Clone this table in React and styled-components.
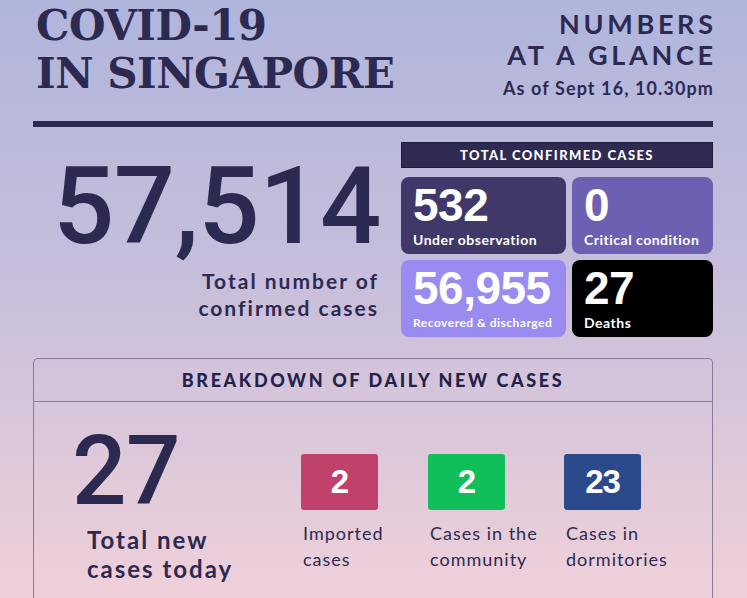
import React from "react";
import styled, { createGlobalStyle } from "styled-components";

const GlobalStyle = createGlobalStyle`
  html, body {
    margin: 0;
    padding: 0;
  }
  body {
    width: 747px;
    height: 598px;
    overflow: hidden;
    background: linear-gradient(180deg, #b0b5dc 0%, #c6bedb 45%, #efd0d9 100%);
    font-family: "Lato", "Liberation Sans", sans-serif;
    color: #2d2a52;
  }
`;

const Page = styled.div`
  width: 747px;
  height: 598px;
  overflow: hidden;
  box-sizing: border-box;
  padding: 0 34px 0 33px;
`;

const Header = styled.header`
  display: flex;
  justify-content: space-between;
  align-items: flex-start;
  padding: 2px 0 0 3px;
  height: 119px;
  border-bottom: 6px solid #2d2a52;
  box-sizing: content-box;
`;

const Title = styled.h1`
  margin: 0;
  font-family: "DejaVu Serif", serif;
  font-weight: 900;
  font-size: 42px;
  line-height: 48px;
  letter-spacing: -0.5px;
  text-transform: uppercase;
`;

const Glance = styled.div`
  text-align: right;
  padding-top: 6px;
`;

const GlanceTitle = styled.h2`
  margin: 0;
  font-size: 27px;
  font-weight: 700;
  line-height: 31px;
  letter-spacing: 3.7px;
  margin-right: -3.7px;
`;

const AsOf = styled.p`
  margin: 7px 0 0;
  font-size: 18px;
  font-weight: 700;
  letter-spacing: 1.1px;
  margin-right: -1px;
`;

const Summary = styled.section`
  display: grid;
  grid-template-columns: 1fr 312px;
  gap: 24px;
  padding: 15px 0 0 0;
`;

const TotalBlock = styled.div`
  display: flex;
  flex-direction: column;
  align-items: flex-end;
`;

const BigNumber = styled.div`
  font-family: "Roboto", "Liberation Sans", sans-serif;
  font-weight: 500;
  font-size: ${(p) => p.$size}px;
  line-height: 0.94;
  letter-spacing: -0.5px;
`;

const TotalCount = styled(BigNumber)`
  margin: 14px -4px 0 0;
`;

const TotalLabel = styled.div`
  font-size: 21px;
  font-weight: 700;
  letter-spacing: 2px;
  line-height: 27px;
  text-align: right;
  margin: 9px -2px 0 0;
`;

const Panel = styled.div`
  display: flex;
  flex-direction: column;
  gap: 9px;
`;

const PanelHead = styled.div`
  background: #2e2a52;
  border: 1px solid #1f1c3c;
  color: #fff;
  height: 24px;
  display: flex;
  align-items: center;
  justify-content: center;
  font-size: 13px;
  font-weight: 900;
  letter-spacing: 1.4px;
`;

const CardGrid = styled.div`
  display: grid;
  grid-template-columns: 165px 141px;
  grid-auto-rows: 77px;
  gap: 6px;
`;

const StatCard = styled.div`
  background: ${(p) => p.$bg};
  border-radius: 8px;
  color: #fff;
  padding: 7px 0 0 12px;
  box-sizing: border-box;
  overflow: hidden;
`;

const StatNumber = styled.div`
  font-family: "Liberation Sans", sans-serif;
  font-weight: 700;
  font-size: 46px;
  line-height: 42px;
  letter-spacing: -0.5px;
`;

const StatLabel = styled.div`
  font-size: ${(p) => p.$size || 14}px;
  font-weight: 700;
  letter-spacing: 0.5px;
  line-height: 17px;
  margin-top: 5px;
  white-space: nowrap;
`;

const Breakdown = styled.section`
  margin-top: 21px;
  border: 1px solid #8a7b9a;
  border-bottom: none;
  border-radius: 5px 5px 0 0;
  height: 260px;
`;

const BreakdownHead = styled.div`
  height: 42px;
  border-bottom: 1px solid #8a7b9a;
  display: flex;
  align-items: center;
  justify-content: center;
  font-size: 18px;
  font-weight: 900;
  letter-spacing: 2.6px;
  color: #24224a;
`;

const BreakdownBody = styled.div`
  display: flex;
  padding: 24px 0 0 38px;
`;

const NewTotal = styled.div`
  width: 229px;
`;

const NewLabel = styled.div`
  font-size: 24px;
  font-weight: 700;
  letter-spacing: 2px;
  line-height: 29px;
  margin: 9px 0 0 15px;
`;

const Split = styled.div`
  display: flex;
  flex-direction: column;
  width: ${(p) => p.$w}px;
  padding-top: 28px;
`;

const Tag = styled.div`
  width: 77px;
  height: 56px;
  border-radius: 3px;
  background: ${(p) => p.$bg};
  color: #fff;
  display: flex;
  align-items: center;
  justify-content: center;
  font-family: "Liberation Sans", sans-serif;
  font-weight: 700;
  font-size: 33px;
  letter-spacing: -1px;
`;

const TagLabel = styled.div`
  font-size: 18px;
  line-height: 26px;
  letter-spacing: 1px;
  margin: 10px 0 0 2px;
  color: #2d2a52;
`;

const cards = [
  { n: "532", label: "Under observation", bg: "#3f3868" },
  { n: "0", label: "Critical condition", bg: "#6d60b2" },
  { n: "56,955", label: "Recovered & discharged", bg: "#9a8bf0", small: true },
  { n: "27", label: "Deaths", bg: "#000" },
];

const splits = [
  { n: "2", label: ["Imported", "cases"], bg: "#c04169", w: 127 },
  { n: "2", label: ["Cases in the", "community"], bg: "#10bf59", w: 136 },
  { n: "23", label: ["Cases in", "dormitories"], bg: "#2a4a8b", w: 130 },
];

export default function App() {
  return (
    <>
      <GlobalStyle />
      <Page>
        <Header>
          <Title>
            Covid-19
            <br />
            In Singapore
          </Title>
          <Glance>
            <GlanceTitle>
              NUMBERS
              <br />
              AT A GLANCE
            </GlanceTitle>
            <AsOf>As of Sept 16, 10.30pm</AsOf>
          </Glance>
        </Header>

        <Summary>
          <TotalBlock>
            <TotalCount $size={108}>57,514</TotalCount>
            <TotalLabel>
              Total number of
              <br />
              confirmed cases
            </TotalLabel>
          </TotalBlock>
          <Panel>
            <PanelHead>TOTAL CONFIRMED CASES</PanelHead>
            <CardGrid>
              {cards.map((c) => (
                <StatCard key={c.label} $bg={c.bg}>
                  <StatNumber>{c.n}</StatNumber>
                  <StatLabel $size={c.small ? 12 : 14}>{c.label}</StatLabel>
                </StatCard>
              ))}
            </CardGrid>
          </Panel>
        </Summary>

        <Breakdown>
          <BreakdownHead>BREAKDOWN OF DAILY NEW CASES</BreakdownHead>
          <BreakdownBody>
            <NewTotal>
              <BigNumber $size={96}>27</BigNumber>
              <NewLabel>
                Total new
                <br />
                cases today
              </NewLabel>
            </NewTotal>
            {splits.map((s) => (
              <Split key={s.label[0]} $w={s.w}>
                <Tag $bg={s.bg}>{s.n}</Tag>
                <TagLabel>
                  {s.label[0]}
                  <br />
                  {s.label[1]}
                </TagLabel>
              </Split>
            ))}
          </BreakdownBody>
        </Breakdown>
      </Page>
    </>
  );
}
